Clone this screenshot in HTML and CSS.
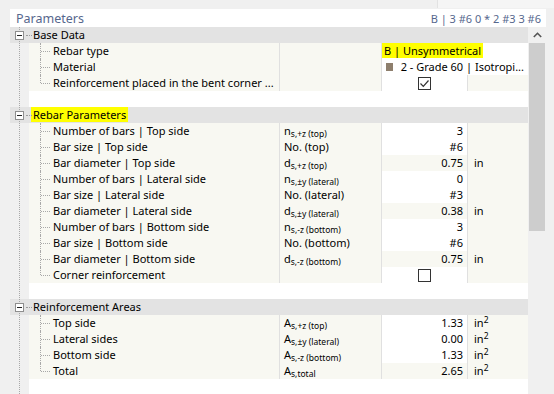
FILE: index.html
```html
<!DOCTYPE html>
<html lang="en">
<head>
  <meta charset="UTF-8">
  <title>Parameters</title>
  <link rel="stylesheet" href="styles.css">
</head>
<body>

  <div class="topbar"><div class="topbar-tab"></div></div>

  <div class="panel">
    <div class="title">
      <span class="title-main">Parameters</span>
      <span>B | 3 #6 0 * 2 #3 3 #6</span>
    </div>

    <div class="body">
      <div class="tree">

        <!-- Base Data -->
        <div class="row section">
          <div class="gutter"><span class="toggle"></span></div>
          <div class="section-label"><span>Base Data</span></div>
        </div>
        <div class="row">
          <div class="gutter"></div>
          <div class="name">Rebar type</div>
          <div class="sym"></div>
          <div class="val wide white"><span class="mark">B | Unsymmetrical</span></div>
        </div>
        <div class="row">
          <div class="gutter"></div>
          <div class="name">Material</div>
          <div class="sym"></div>
          <div class="val wide white left"><span class="swatch"></span>2 - Grade 60 | Isotropi...</div>
        </div>
        <div class="row">
          <div class="gutter"></div>
          <div class="name last">Reinforcement placed in the bent corner ...</div>
          <div class="sym"></div>
          <div class="val white center">
            <span class="check">
              <svg width="11" height="11" viewBox="0 0 11 11"><path d="M1.5 5.5 L4.3 8.3 L9.5 2.5" fill="none" stroke="#333" stroke-width="1.2"/></svg>
            </span>
          </div>
          <div class="unit"></div>
        </div>
        <div class="row blank">
          <div class="gutter"></div>
          <div class="fill"></div>
        </div>

        <!-- Rebar Parameters -->
        <div class="row section">
          <div class="gutter"><span class="toggle"></span></div>
          <div class="section-label"><span class="mark">Rebar Parameters</span></div>
        </div>
        <div class="row">
          <div class="gutter"></div>
          <div class="name">Number of bars | Top side</div>
          <div class="sym">n<sub>s,+z (top)</sub></div>
          <div class="val white">3</div>
          <div class="unit"></div>
        </div>
        <div class="row">
          <div class="gutter"></div>
          <div class="name">Bar size | Top side</div>
          <div class="sym">No. (top)</div>
          <div class="val white">#6</div>
          <div class="unit"></div>
        </div>
        <div class="row">
          <div class="gutter"></div>
          <div class="name">Bar diameter | Top side</div>
          <div class="sym">d<sub>s,+z (top)</sub></div>
          <div class="val">0.75</div>
          <div class="unit">in</div>
        </div>
        <div class="row">
          <div class="gutter"></div>
          <div class="name">Number of bars | Lateral side</div>
          <div class="sym">n<sub>s,±y (lateral)</sub></div>
          <div class="val white">0</div>
          <div class="unit"></div>
        </div>
        <div class="row">
          <div class="gutter"></div>
          <div class="name">Bar size | Lateral side</div>
          <div class="sym">No. (lateral)</div>
          <div class="val white">#3</div>
          <div class="unit"></div>
        </div>
        <div class="row">
          <div class="gutter"></div>
          <div class="name">Bar diameter | Lateral side</div>
          <div class="sym">d<sub>s,±y (lateral)</sub></div>
          <div class="val">0.38</div>
          <div class="unit">in</div>
        </div>
        <div class="row">
          <div class="gutter"></div>
          <div class="name">Number of bars | Bottom side</div>
          <div class="sym">n<sub>s,-z (bottom)</sub></div>
          <div class="val white">3</div>
          <div class="unit"></div>
        </div>
        <div class="row">
          <div class="gutter"></div>
          <div class="name">Bar size | Bottom side</div>
          <div class="sym">No. (bottom)</div>
          <div class="val white">#6</div>
          <div class="unit"></div>
        </div>
        <div class="row">
          <div class="gutter"></div>
          <div class="name">Bar diameter | Bottom side</div>
          <div class="sym">d<sub>s,-z (bottom)</sub></div>
          <div class="val">0.75</div>
          <div class="unit">in</div>
        </div>
        <div class="row">
          <div class="gutter"></div>
          <div class="name last">Corner reinforcement</div>
          <div class="sym"></div>
          <div class="val white center"><span class="check"></span></div>
          <div class="unit"></div>
        </div>
        <div class="row blank">
          <div class="gutter"></div>
          <div class="fill"></div>
        </div>

        <!-- Reinforcement Areas -->
        <div class="row section">
          <div class="gutter"><span class="toggle"></span></div>
          <div class="section-label"><span>Reinforcement Areas</span></div>
        </div>
        <div class="row">
          <div class="gutter"></div>
          <div class="name">Top side</div>
          <div class="sym">A<sub>s,+z (top)</sub></div>
          <div class="val white">1.33</div>
          <div class="unit">in<sup>2</sup></div>
        </div>
        <div class="row">
          <div class="gutter"></div>
          <div class="name">Lateral sides</div>
          <div class="sym">A<sub>s,±y (lateral)</sub></div>
          <div class="val white">0.00</div>
          <div class="unit">in<sup>2</sup></div>
        </div>
        <div class="row">
          <div class="gutter"></div>
          <div class="name">Bottom side</div>
          <div class="sym">A<sub>s,-z (bottom)</sub></div>
          <div class="val white">1.33</div>
          <div class="unit">in<sup>2</sup></div>
        </div>
        <div class="row">
          <div class="gutter"></div>
          <div class="name last">Total</div>
          <div class="sym">A<sub>s,total</sub></div>
          <div class="val">2.65</div>
          <div class="unit">in<sup>2</sup></div>
        </div>
        <div class="row blank">
          <div class="gutter"></div>
          <div class="fill"></div>
        </div>

      </div>

      <div class="scrollbar">
        <div class="scroll-arrow">
          <svg width="9" height="6" viewBox="0 0 9 6"><path d="M0.8 5 L4.5 1.3 L8.2 5" fill="none" stroke="#555" stroke-width="1.6"/></svg>
        </div>
        <div class="scroll-thumb"></div>
      </div>
    </div>
  </div>

</body>
</html>
```

FILE: styles.css
```css
body {
  margin: 0;
  width: 554px;
  height: 394px;
  overflow: hidden;
  background-color: #f0f0f0;
  font-family: "Noto Sans", sans-serif;
  font-size: 11px;
  color: #000;
}
.topbar {
  height: 9px;
  display: flex;
  justify-content: flex-end;
}
.topbar-tab {
  width: 116px;
  height: 8px;
  background-color: #f5f5f5;
  border-left: 1px solid #e2e2e2;
}
.panel {
  margin-left: 10px;
  width: 536px;
  background-color: #fff;
}
.title {
  height: 18px;
  display: flex;
  justify-content: space-between;
  align-items: center;
  padding: 0 5px 0 6px;
  color: #56678d;
  font-size: 11px;
}
.title-main {
  font-size: 12.5px;
}
.body {
  display: flex;
}
.tree {
  width: 518px;
}
.row {
  display: grid;
  grid-template-columns: 19px 251px 102px 86px 60px;
  height: 16px;
  line-height: 16px;
}
.gutter {
  position: relative;
  background-color: #f0f0f0;
  background-image: linear-gradient(#a8a8a8 50%, transparent 50%);
  background-size: 1px 2px;
  background-repeat: repeat-y;
  background-position: 9px 0;
}
.section {
  background-color: #e3e3e3;
}
.section .gutter {
  background-color: #e3e3e3;
}
.toggle {
  position: absolute;
  left: 5px;
  top: 4px;
  width: 7px;
  height: 7px;
  border: 1px solid #8e8e8e;
  background-color: #fff;
}
.toggle::before {
  content: "";
  position: absolute;
  left: 1px;
  top: 3px;
  width: 5px;
  height: 1px;
  background-color: #222;
}
.toggle::after {
  content: "";
  position: absolute;
  left: 10px;
  top: 3px;
  width: 6px;
  border-top: 1px dotted #9a9a9a;
}
.section-label {
  grid-column: 2 / 6;
  padding-left: 2px;
}
.section-label span {
  display: inline-block;
  height: 15px;
  line-height: 15px;
  padding: 0 2px;
}
.mark {
  background-color: #ffff00;
}
.name {
  position: relative;
  padding-left: 24px;
  background-color: #f8f8f2;
  border-right: 1px solid #e0e0e0;
  white-space: nowrap;
  overflow: hidden;
}
.name::before {
  content: "";
  position: absolute;
  left: 11px;
  top: 0;
  bottom: 0;
  border-left: 1px dotted #a8a8a8;
}
.name.last::before {
  bottom: 8px;
}
.name::after {
  content: "";
  position: absolute;
  left: 12px;
  top: 8px;
  width: 9px;
  border-top: 1px dotted #a8a8a8;
}
.sym {
  padding-left: 4px;
  background-color: #f8f8f2;
  border-right: 1px solid #e0e0e0;
  white-space: nowrap;
}
.sym sub {
  font-size: 8.5px;
  vertical-align: -2px;
  line-height: 0;
}
.val {
  padding-right: 4px;
  text-align: right;
  background-color: #f8f8f2;
  border-right: 1px solid #e0e0e0;
  white-space: nowrap;
  overflow: hidden;
}
.val.white {
  background-color: #fff;
}
.val.wide {
  grid-column: 4 / 6;
  border-right: none;
  text-align: left;
  padding-left: 0;
}
.val.left {
  display: flex;
  align-items: center;
  padding-left: 4px;
}
.val.center {
  display: flex;
  justify-content: center;
  align-items: center;
  padding-right: 0;
}
.val .mark {
  padding: 0 2px;
}
.swatch {
  width: 8px;
  height: 8px;
  margin-right: 8px;
  background-color: #8e7f6d;
}
.check {
  width: 11px;
  height: 11px;
  border: 1px solid #333;
  background-color: #fff;
  display: flex;
}
.unit {
  padding-left: 6px;
  background-color: #f8f8f2;
}
.unit sup {
  font-size: 8.5px;
  vertical-align: 4px;
  line-height: 0;
}
.blank .fill {
  grid-column: 2 / 6;
  background-color: #fff;
}
.scrollbar {
  width: 18px;
  height: 367px;
  background-color: #f0f0f0;
}
.scroll-arrow {
  height: 16px;
  display: flex;
  justify-content: center;
  align-items: center;
}
.scroll-thumb {
  width: 16px;
  margin-left: 1px;
  height: 188px;
  background-color: #cdcdcd;
}
```
